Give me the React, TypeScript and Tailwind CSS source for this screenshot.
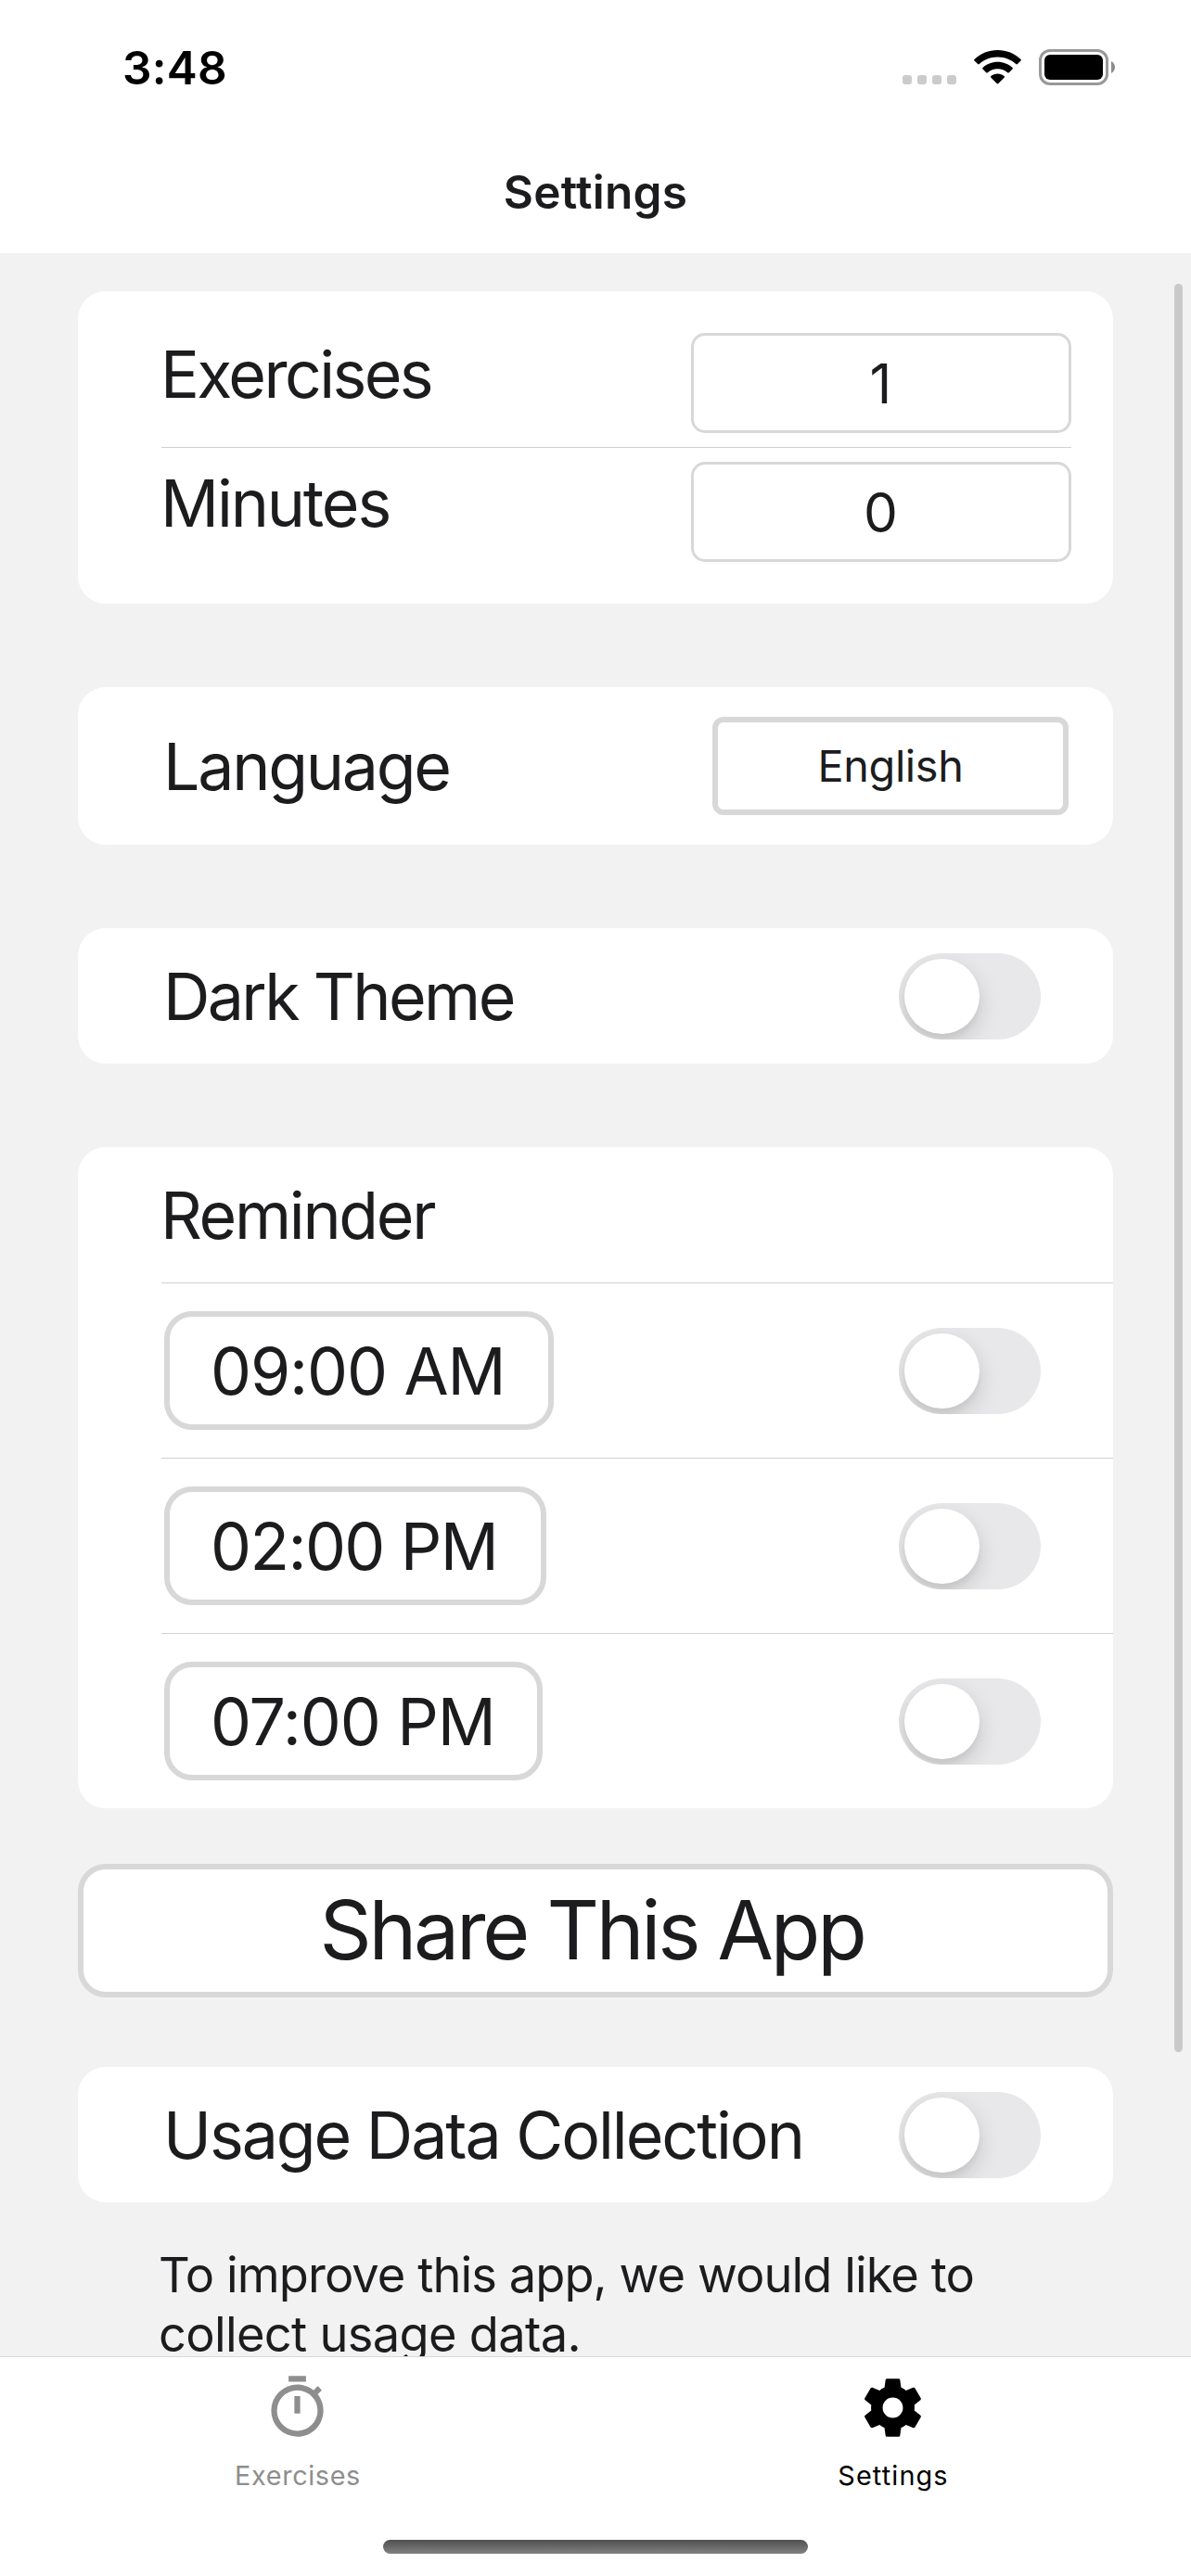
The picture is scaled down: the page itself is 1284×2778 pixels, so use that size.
import React from 'react';

const label = 'text-[69.8px] leading-none whitespace-nowrap';

function Switch() {
  return (
    <button
      role="switch"
      aria-checked="false"
      className="flex h-[93px] w-[153px] shrink-0 items-center overflow-hidden rounded-full bg-[#e8e8ea] pl-1.5"
    >
      <span className="size-[81px] rounded-full bg-white shadow-[0_9px_24px_rgba(0,0,0,0.15),0_6px_6px_rgba(0,0,0,0.04)]" />
    </button>
  );
}

function StatusBar() {
  return (
    <div className="flex h-[145px] items-center justify-between pr-[82px] pl-[132px]">
      <span className="pt-0.5 text-[49.5px] leading-none font-semibold tracking-[0.25px] text-black">3:48</span>
      <div className="flex items-center">
        <div className="mt-[27px] mr-[19px] flex gap-1.5">
          <span className="size-[10px] rounded-[3px] bg-[#cbcbcb]" />
          <span className="size-[10px] rounded-[3px] bg-[#cbcbcb]" />
          <span className="size-[10px] rounded-[3px] bg-[#cbcbcb]" />
          <span className="size-[10px] rounded-[3px] bg-[#cbcbcb]" />
        </div>
        <svg className="mr-[19px] h-[37px] w-[51px]" viewBox="0 0 51 37">
          <path d="M25.500 0C35 0 43.800 3.700 50.500 9.900q.8.700 0 1.500l-3.600 3.700q-.8.800-1.700 0C39.900 10.200 33 7.500 25.500 7.500S11.100 10.200 5.800 15.100q-.9.800-1.700 0L.5 11.400q-.8-.8 0-1.500C7.200 3.700 16 0 25.500 0z" />
          <path d="M25.500 12.800c6.100 0 11.700 2.300 16 6.100q.8.800 0 1.600l-3.700 3.700q-.8.700-1.600 0c-2.900-2.500-6.600-4-10.700-4s-7.800 1.500-10.700 4q-.8.700-1.600 0l-3.700-3.700q-.8-.8 0-1.600c4.300-3.800 9.900-6.100 16-6.100z" />
          <path d="M25.500 25.600c2.700 0 5.200.9 7.100 2.500q.9.800 0 1.600l-6.300 6.400q-.8.800-1.600 0l-6.300-6.400q-.9-.8 0-1.600c1.900-1.600 4.400-2.500 7.100-2.500z" />
        </svg>
        <div className="h-[39px] w-[75px] rounded-[12px] border-[3px] border-[#999] p-[3px]">
          <div className="h-full w-full rounded-[6px] bg-black" />
        </div>
        <svg className="ml-[3px] h-[13px] w-1" viewBox="0 0 4 13">
          <path d="M0 0C2.600 1.200 4 3.700 4 6.500S2.600 11.800 0 13z" fill="#8c8c8c" />
        </svg>
      </div>
    </div>
  );
}

function NumberRow({ name, value, tracking }: { name: string; value: string; tracking: string }) {
  return (
    <div className="flex h-[108px] justify-between">
      <span className={`${label} ${tracking} -ml-px pt-[10px]`}>{name}</span>
      <div className="flex w-[410px] items-center justify-center rounded-[15px] border-[3px] border-[#d8d8d8] pt-0.5 pr-px text-[58.5px] leading-none">
        {value}
      </div>
    </div>
  );
}

function ReminderRow({ time, width }: { time: string; width: string }) {
  return (
    <div className="flex h-[189px] items-center justify-between border-t border-[#d0d0d0] pr-[78px] pl-[3px]">
      <div className={`${label} ${width} flex h-[128px] items-center rounded-[30px] border-[6px] border-[#d8d8d8] pt-px pl-[44px]`}>
        {time}
      </div>
      <Switch />
    </div>
  );
}

export default function App() {
  return (
    <div className="flex h-[2778px] w-[1284px] flex-col overflow-hidden bg-white font-['Inter',sans-serif] text-[#1c1c1e]">
      <header className="h-[273px] shrink-0">
        <StatusBar />
        <h1 className="flex h-[125px] items-center justify-center pt-px text-[49.5px] leading-none font-semibold tracking-[0.28px]">
          Settings
        </h1>
      </header>

      <main className="relative h-[2268px] shrink-0 overflow-hidden bg-[#f2f2f2] px-[84px] pt-[41px]">
        <section className="h-[337px] rounded-[30px] bg-white pt-[45px] pr-[45px] pl-[90px]">
          <NumberRow name="Exercises" value="1" tracking="tracking-[-2.6px]" />
          <div className="mt-[15px] mb-[15px] h-px bg-[#d0d0d0]" />
          <NumberRow name="Minutes" value="0" tracking="tracking-[-2.15px]" />
        </section>

        <section className="mt-[90px] flex h-[170px] items-center justify-between rounded-[30px] bg-white pr-[48px] pl-[92px]">
          <span className={`${label} pt-0.5 tracking-[-2.25px]`}>Language</span>
          <button className="flex h-[106px] w-[384px] items-center justify-center rounded-[12px] border-[6px] border-[#d8d8d8] text-[46.8px] leading-none tracking-[-0.38px]">
            English
          </button>
        </section>

        <section className="mt-[90px] flex h-[146px] items-center justify-between rounded-[30px] bg-white pr-[78px] pl-[92px]">
          <span className={`${label} pt-0.5 tracking-[-2.6px]`}>Dark Theme</span>
          <Switch />
        </section>

        <section className="mt-[90px] h-[713px] rounded-[30px] bg-white pl-[90px]">
          <h2 className={`${label} -ml-px flex h-[146px] items-center pt-0.5 tracking-[-2.3px]`}>Reminder</h2>
          <ReminderRow time="09:00 AM" width="w-[420px] tracking-[-1.1px]" />
          <ReminderRow time="02:00 PM" width="w-[412px] tracking-[-1.6px]" />
          <ReminderRow time="07:00 PM" width="w-[408px] tracking-[-1.05px]" />
        </section>

        <button className="mt-[60px] flex h-[144px] w-full items-center justify-center rounded-[30px] border-[6px] border-[#d8d8d8] bg-white pr-[8px] text-[87.6px] leading-none tracking-[-3.25px]">
          Share This App
        </button>

        <section className="mt-[75px] flex h-[146px] items-center justify-between rounded-[30px] bg-white pr-[78px] pl-[92px]">
          <span className={`${label} pt-0.5 tracking-[-2.04px]`}>Usage Data Collection</span>
          <Switch />
        </section>

        <p className="mt-[46px] ml-[87px] text-[52.4px] leading-[64px] whitespace-nowrap">
          <span className="block tracking-[-0.93px]">To improve this app, we would like to</span>
          <span className="block tracking-[-0.69px]">collect usage data.</span>
        </p>

        <div className="absolute top-[33px] right-[9px] h-[1907px] w-[9px] rounded-full bg-[#c9c9c9]" />
      </main>

      <nav className="flex h-[198px] shrink-0 border-t border-[#d8d8d8]">
        <div className="flex flex-1 flex-col items-center pt-[17px] text-[#8e8e8e]">
          <svg className="mr-0.5 size-[75px]" viewBox="0 0 24 24" fill="currentColor">
            <path d="M12 20a7 7 0 0 1-7-7 7 7 0 0 1 7-7 7 7 0 0 1 7 7 7 7 0 0 1-7 7m7.030-12.610l1.420-1.420c-.45-.51-.9-.97-1.410-1.410L17.620 6c-1.550-1.260-3.500-2-5.620-2a9 9 0 0 0-9 9 9 9 0 0 0 9 9c5 0 9-4.030 9-9 0-2.120-.74-4.070-1.970-5.610M11 14h2V8h-2m4-7H9v2h6V1z" />
          </svg>
          <span className="mt-[22px] text-[28.8px] leading-none tracking-[0.63px]">Exercises</span>
        </div>
        <div className="flex flex-1 flex-col items-center pt-[17px] text-black">
          <svg className="mr-0.5 size-[75px]" viewBox="0 0 24 24" fill="currentColor">
            <path d="M12 15.500A3.500 3.500 0 0 1 8.500 12 3.500 3.500 0 0 1 12 8.500a3.500 3.500 0 0 1 3.500 3.500 3.500 3.500 0 0 1-3.500 3.500m7.430-2.530c.04-.32.07-.64.07-.97 0-.33-.03-.66-.07-1l2.110-1.630c.19-.15.24-.42.12-.64l-2-3.460c-.12-.22-.39-.31-.61-.22l-2.490 1c-.52-.39-1.060-.73-1.690-.98l-.37-2.650A.506.506 0 0 0 14 2h-4c-.25 0-.46.18-.5.42l-.37 2.650c-.63.25-1.170.59-1.690.98l-2.490-1c-.22-.09-.49 0-.61.22l-2 3.460c-.13.22-.07.49.12.64L4.570 11c-.04.34-.07.67-.07 1 0 .33.03.65.07.97l-2.110 1.660c-.19.15-.25.42-.12.64l2 3.460c.12.22.39.3.61.22l2.490-1.010c.52.4 1.060.74 1.690.99l.37 2.650c.04.24.25.42.5.42h4c.25 0 .46-.18.5-.42l.37-2.650c.63-.26 1.170-.59 1.690-.99l2.490 1.010c.22.08.49 0 .61-.22l2-3.460c.12-.22.07-.49-.12-.64l-2.110-1.660z" />
          </svg>
          <span className="mt-[22px] text-[28.8px] leading-none tracking-[1.15px]">Settings</span>
        </div>
      </nav>

      <div className="mx-auto h-[15px] w-[458px] shrink-0 rounded-full bg-linear-to-b from-[#505050] to-[#828282]" />
    </div>
  );
}
